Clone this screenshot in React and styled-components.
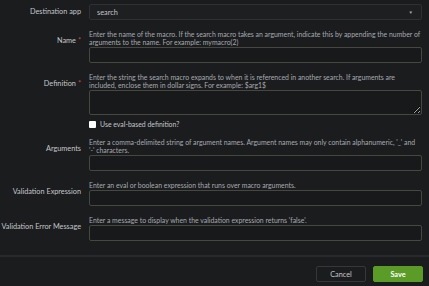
import React from "react";
import styled, { createGlobalStyle } from "styled-components";

const GlobalStyle = createGlobalStyle`
  html, body {
    margin: 0;
    padding: 0;
    background: #1b1c1e;
  }
  body {
    font-family: Lato, "Liberation Sans", sans-serif;
    color: #c4c7ca;
  }
`;

const Modal = styled.div`
  width: 429px;
  height: 286px;
  background: #1b1c1e;
  display: flex;
  flex-direction: column;
`;

const Body = styled.div`
  padding: 4px 7px 0 0;
  display: flex;
  flex-direction: column;
  gap: 10px;
`;

const Row = styled.div`
  display: grid;
  grid-template-columns: 81px 333px;
  column-gap: 8px;
  align-items: ${(p) => (p.$center ? "center" : "start")};
`;

const Label = styled.label`
  text-align: right;
  font-size: 7.3px;
  line-height: 8px;
  color: #c4c7ca;
  padding-top: ${(p) => (p.$center ? "0" : "7px")};
  white-space: nowrap;
`;

const Req = styled.span`
  color: #d0454d;
  margin-left: 2px;
`;

const Control = styled.div`
  display: flex;
  flex-direction: column;
`;

const Help = styled.div`
  font-size: 6.9px;
  line-height: 8px;
  color: #a6aaae;
  margin-bottom: 1px;
`;

const Input = styled.input`
  box-sizing: border-box;
  width: 100%;
  height: 16px;
  margin: 0;
  background: #18191a;
  border: 1px solid #46473f;
  border-radius: 2px;
  outline: none;
`;

const TextArea = styled.textarea`
  box-sizing: border-box;
  width: 100%;
  height: 25px;
  margin: 0;
  background: #18191a;
  border: 1px solid #46473f;
  border-radius: 2px;
  resize: vertical;
  outline: none;
  display: block;
  color-scheme: dark;
`;

const Select = styled.div`
  box-sizing: border-box;
  height: 16px;
  background: #1e1f21;
  border: 1px solid #2f3033;
  border-radius: 2px;
  display: flex;
  align-items: center;
  justify-content: space-between;
  padding: 0 8px 0 7px;
  font-size: 7.3px;
  color: #c4c7ca;
`;

const Caret = styled.span`
  font-size: 4.5px;
  color: #a6aaae;
`;

const CheckRow = styled.label`
  display: flex;
  align-items: center;
  gap: 4px;
  font-size: 6.9px;
  line-height: 8px;
  color: #c4c7ca;
  margin-top: -5px;
`;

const Box = styled.span`
  width: 7px;
  height: 7px;
  background: #ffffff;
  border-radius: 1px;
`;

const Footer = styled.div`
  margin-top: 14px;
  border-top: 2px solid #28292c;
  padding: 9px 6px 0 0;
  display: flex;
  justify-content: flex-end;
  gap: 7px;
`;

const Button = styled.button`
  box-sizing: border-box;
  width: 50px;
  height: 16px;
  border-radius: 2px;
  font-family: Lato, "Liberation Sans", sans-serif;
  font-size: 7.3px;
  font-weight: ${(p) => (p.$primary ? 700 : 400)};
  color: ${(p) => (p.$primary ? "#ffffff" : "#c4c7ca")};
  background: ${(p) => (p.$primary ? "#5b9b27" : "#1b1c1e")};
  border: 1px solid ${(p) => (p.$primary ? "#5b9b27" : "#36373a")};
  padding: 0;
`;

const fields = [
  {
    label: "Name",
    required: true,
    help: "Enter the name of the macro. If the search macro takes an argument, indicate this by appending the number of arguments to the name. For example: mymacro(2)",
  },
  {
    label: "Definition",
    required: true,
    multiline: true,
    help: "Enter the string the search macro expands to when it is referenced in another search. If arguments are included, enclose them in dollar signs. For example: $arg1$",
  },
  {
    label: "Arguments",
    // word joiner keeps '-' together so it wraps like the original
    help: "Enter a comma-delimited string of argument names. Argument names may only contain alphanumeric, '_' and '-\u2060' characters.",
  },
  {
    label: "Validation Expression",
    help: "Enter an eval or boolean expression that runs over macro arguments.",
  },
  {
    label: "Validation Error Message",
    help: "Enter a message to display when the validation expression returns 'false'.",
  },
];

export default function App() {
  return (
    <>
      <GlobalStyle />
      <Modal>
        <Body>
          <Row $center>
            <Label $center>Destination app</Label>
            <Select>
              <span>search</span>
              <Caret>▼</Caret>
            </Select>
          </Row>
          {fields.map((f) => (
            <React.Fragment key={f.label}>
              <Row>
                <Label>
                  {f.label}
                  {f.required && <Req>*</Req>}
                </Label>
                <Control>
                  <Help>{f.help}</Help>
                  {f.multiline ? <TextArea /> : <Input />}
                </Control>
              </Row>
              {f.multiline && (
                <Row>
                  <span />
                  <CheckRow>
                    <Box />
                    Use eval-based definition?
                  </CheckRow>
                </Row>
              )}
            </React.Fragment>
          ))}
        </Body>
        <Footer>
          <Button>Cancel</Button>
          <Button $primary>Save</Button>
        </Footer>
      </Modal>
    </>
  );
}
